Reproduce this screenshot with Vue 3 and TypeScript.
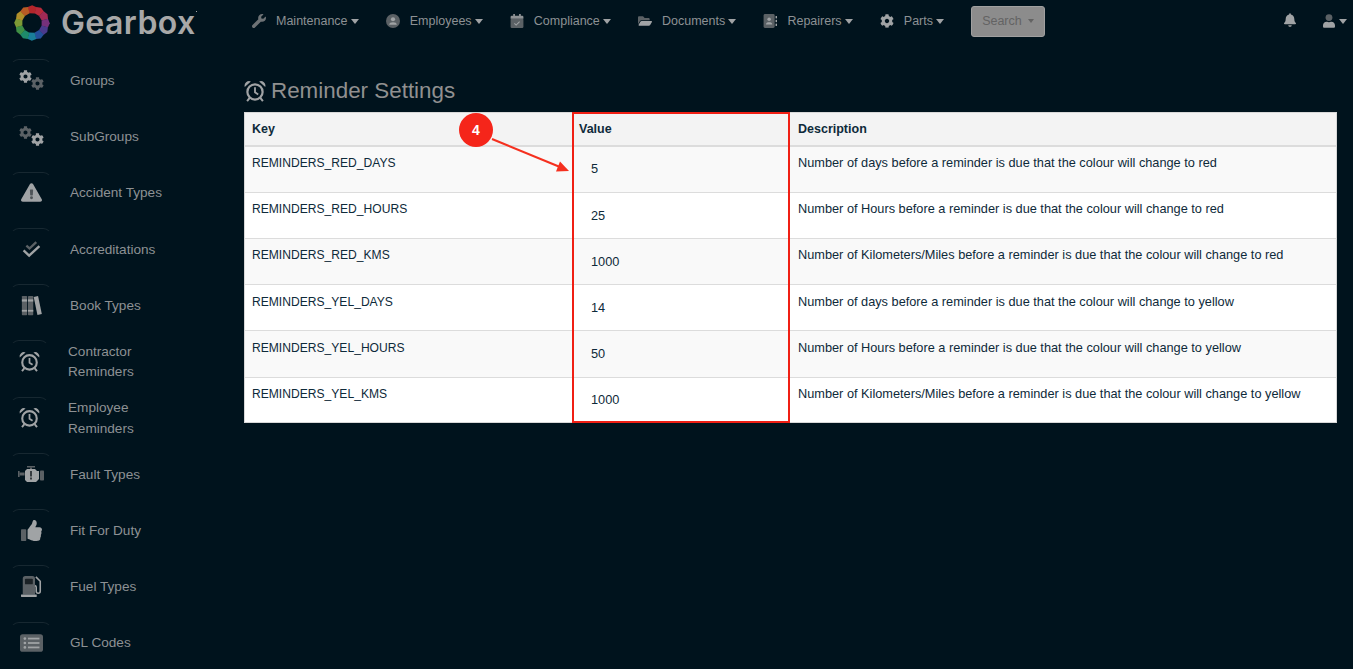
<template>
  <div class="page">
    <header class="topbar">
      <div class="brand">
        <svg class="logo" viewBox="0 0 36 36">
          <polygon v-for="seg in logoSegments" :key="seg.color" :points="seg.points" :fill="seg.color" />
        </svg>
        <span class="brand-name">Gearbox</span>
        <span class="brand-tm"></span>
      </div>

      <nav class="nav">
        <a v-for="item in navItems" :key="item.label" class="nav-item">
          <svg class="nav-icon" :viewBox="icons[item.icon].box">
            <g v-html="icons[item.icon].body"></g>
          </svg>
          <span>{{ item.label }}</span>
          <i class="caret"></i>
        </a>
        <button class="search-btn" type="button">Search <i class="caret small"></i></button>
      </nav>

      <div class="top-right">
        <svg class="bell" :viewBox="icons.bell.box"><g v-html="icons.bell.body"></g></svg>
        <svg class="user" :viewBox="icons.user.box"><g v-html="icons.user.body"></g></svg>
        <i class="caret"></i>
      </div>
    </header>

    <div class="body-wrap">
      <aside class="sidebar">
        <a v-for="item in sideItems" :key="item.label" class="side-item" :class="{ wrapped: item.wrapped }">
          <span class="side-box">
            <svg :width="icons[item.icon].w" :height="icons[item.icon].h" :viewBox="icons[item.icon].box">
              <g v-html="icons[item.icon].body"></g>
            </svg>
          </span>
          <span class="side-label">{{ item.label }}</span>
        </a>
      </aside>

      <main class="content">
        <h1 class="title">
          <svg class="title-icon" :viewBox="icons.alarm.box"><g v-html="icons.alarm.body"></g></svg>
          Reminder Settings
        </h1>

        <div class="table-wrap">
          <table class="settings">
            <colgroup>
              <col class="col-key" />
              <col class="col-value" />
              <col />
            </colgroup>
            <thead>
              <tr>
                <th>Key</th>
                <th>Value</th>
                <th>Description</th>
              </tr>
            </thead>
            <tbody>
              <tr v-for="row in rows" :key="row.key">
                <td class="key">{{ row.key }}</td>
                <td><span class="value">{{ row.value }}</span></td>
                <td>{{ row.description }}</td>
              </tr>
            </tbody>
          </table>

          <!-- annotation drawn on top of the table -->
          <div class="highlight"></div>
          <svg class="arrow" viewBox="0 0 120 70">
            <line x1="8" y1="12" x2="76" y2="40" stroke="#f5301f" stroke-width="2" />
            <polygon points="85,44 72,44.5 76,34.5" fill="#f5301f" />
          </svg>
          <div class="badge">4</div>
        </div>
      </main>
    </div>
  </div>
</template>

<script setup lang="ts">
interface IconDef {
  box: string
  body: string
  w?: number
  h?: number
}

const cog =
  'M487.4 315.7l-42.6-24.6c4.3-23.2 4.3-47 0-70.2l42.6-24.6c4.9-2.8 7.1-8.6 5.5-14-11.1-35.6-30-67.8-54.7-94.6-3.8-4.1-10-5.1-14.8-2.3L380.8 110c-17.9-15.4-38.5-27.3-60.8-35.1V25.8c0-5.6-3.9-10.5-9.4-11.7-36.7-8.2-74.3-7.8-109.2 0-5.5 1.2-9.4 6.1-9.4 11.7V75c-22.2 7.9-42.8 19.8-60.8 35.1L88.7 85.5c-4.9-2.8-11-1.9-14.8 2.3-24.7 26.7-43.6 58.9-54.7 94.6-1.7 5.4.6 11.2 5.5 14L67.3 221c-4.3 23.2-4.3 47 0 70.2l-42.6 24.6c-4.9 2.8-7.1 8.6-5.5 14 11.1 35.6 30 67.8 54.7 94.6 3.8 4.1 10 5.1 14.8 2.3l42.6-24.6c17.9 15.4 38.5 27.3 60.8 35.1v49.2c0 5.6 3.9 10.5 9.4 11.7 36.7 8.2 74.3 7.8 109.2 0 5.5-1.2 9.4-6.1 9.4-11.7v-49.2c22.2-7.9 42.8-19.8 60.8-35.1l42.6 24.6c4.9 2.8 11 1.9 14.8-2.3 24.7-26.7 43.6-58.9 54.7-94.6 1.5-5.5-.7-11.3-5.6-14.1zM256 336c-44.1 0-80-35.9-80-80s35.9-80 80-80 80 35.9 80 80-35.9 80-80 80z'

const LIGHT = '#a0a3a5'
const DIM = '#5b6165'

const gears = (first: string, second: string): string =>
  `<path transform="scale(.0254)" fill="${first}" d="${cog}"/>` +
  `<path transform="translate(12 7) scale(.0254)" fill="${second}" d="${cog}"/>`

const alarm = `
  <circle cx="12" cy="13" r="8.3" fill="none" stroke="${LIGHT}" stroke-width="2.4"/>
  <path d="M12 8V13.5L15.5 15.8" fill="none" stroke="${LIGHT}" stroke-width="2"/>
  <path d="M.8 7.5 A5 5 0 0 1 7.5 1.6 Z M23.2 7.5 A5 5 0 0 0 16.5 1.6 Z" fill="${LIGHT}"/>
  <path d="M6.2 19.5L3.4 23M17.8 19.5L20.6 23" stroke="${LIGHT}" stroke-width="2.2"/>`

const icons: Record<string, IconDef> = {
  wrench: {
    box: '0 0 512 512',
    body: `<path fill="#6d7275" d="M507.73 109.1c-2.24-9.03-13.54-12.09-20.12-5.51l-74.36 74.36-67.88-11.31-11.31-67.88 74.36-74.36c6.62-6.62 3.43-17.9-5.66-20.16-47.38-11.74-99.55.91-136.58 37.93-39.64 39.64-50.55 97.1-34.05 147.2L18.74 402.76c-24.99 24.99-24.99 65.51 0 90.5 24.99 24.99 65.51 24.99 90.5 0l213.21-213.21c50.12 16.71 107.47 5.68 147.37-34.22 37.07-37.07 49.7-89.32 37.91-136.73z"/>`
  },
  userCircle: {
    box: '0 0 24 24',
    body: `<circle cx="12" cy="12" r="12" fill="#5b6165"/><circle cx="12" cy="9" r="3.6" fill="#a0a3a5"/><path d="M5.5 18.5c0-3.2 2.6-4.5 6.5-4.5s6.5 1.3 6.5 4.5z" fill="#a0a3a5"/>`
  },
  calendar: {
    box: '0 0 24 24',
    body: `<rect x="1" y="8" width="22" height="16" rx="2" fill="#5b6165"/><path d="M3 3h18a2 2 0 0 1 2 2v3H1V5a2 2 0 0 1 2-2z" fill="#8f9295"/><rect x="5.5" y="0" width="3" height="5" fill="#8f9295"/><rect x="15.5" y="0" width="3" height="5" fill="#8f9295"/><path d="M7.5 16l3 3 6-6" fill="none" stroke="#a0a3a5" stroke-width="1.8"/>`
  },
  folder: {
    box: '0 0 576 512',
    body: `<path fill="#a0a3a5" d="M572.694 292.093L500.27 416.248A63.997 63.997 0 0 1 444.989 448H45.025c-18.523 0-30.064-20.093-20.731-36.093l72.424-124.155A64 64 0 0 1 152 256h399.964c18.523 0 30.064 20.093 20.73 36.093z"/><path fill="#5b6165" d="M152 224h328v-48c0-26.51-21.49-48-48-48H272l-64-64H48C21.49 64 0 85.49 0 112v278.046l69.077-118.418C86.214 242.25 117.989 224 152 224z"/>`
  },
  addressBook: {
    box: '0 0 24 24',
    body: `<rect x="1" y="0" width="19" height="24" rx="2.5" fill="#5b6165"/><circle cx="10.5" cy="9" r="3" fill="#a0a3a5"/><path d="M5 18c0-3 2.4-4 5.5-4s5.5 1 5.5 4z" fill="#a0a3a5"/><rect x="21.5" y="3.5" width="2.5" height="4" fill="#a0a3a5"/><rect x="21.5" y="10" width="2.5" height="4" fill="#a0a3a5"/><rect x="21.5" y="16.5" width="2.5" height="4" fill="#a0a3a5"/>`
  },
  cog: {
    box: '0 0 512 512',
    body: `<path fill="#a0a3a5" d="${cog}"/>`
  },
  bell: {
    box: '0 0 448 512',
    body: `<path fill="#a0a3a5" d="M224 512c35.32 0 63.97-28.65 63.97-64H160.03c0 35.35 28.65 64 63.97 64zm215.39-149.71c-19.32-20.76-55.47-51.99-55.47-154.29 0-77.7-54.48-139.9-127.94-155.16V32c0-17.67-14.32-32-31.98-32s-31.98 14.33-31.98 32v20.84C118.56 68.1 64.08 130.3 64.08 208c0 102.3-36.15 133.53-55.47 154.29-6 6.45-8.66 14.16-8.61 21.71.11 16.4 12.98 32 32.1 32h383.8c19.12 0 32-15.6 32.1-32 .05-7.55-2.61-15.27-8.61-21.71z"/>`
  },
  user: {
    box: '0 0 448 512',
    body: `<circle cx="224" cy="128" r="128" fill="#5b6165"/><path fill="#a0a3a5" d="M313.6 288h-16.7c-22.2 10.2-46.9 16-72.9 16s-50.6-5.8-72.9-16h-16.7C60.2 288 0 348.2 0 422.4V464c0 26.5 21.5 48 48 48h352c26.5 0 48-21.5 48-48v-41.6c0-74.2-60.2-134.4-134.4-134.4z"/>`
  },
  gearsA: { box: '0 0 25 20', w: 25, h: 20, body: gears(LIGHT, DIM) },
  gearsB: { box: '0 0 25 20', w: 25, h: 20, body: gears(DIM, LIGHT) },
  warning: {
    box: '0 0 576 512',
    w: 21,
    h: 19,
    body: `<path fill="#a0a3a5" d="M569.517 440.013C587.975 472.007 564.806 512 527.94 512H48.054c-36.937 0-59.999-40.055-41.577-71.987L246.423 23.985c18.467-32.009 64.72-31.951 83.154 0l239.94 416.028z"/><circle cx="288" cy="400" r="40" fill="#4e5458"/><path fill="#4e5458" d="M244.327 188.654l7.418 136c.347 6.364 5.609 11.346 11.982 11.346h48.546c6.373 0 11.635-4.982 11.982-11.346l7.418-136c.375-6.874-5.098-12.654-11.982-12.654h-63.383c-6.884 0-12.356 5.78-11.981 12.654z"/>`
  },
  checks: {
    box: '0 0 24 24',
    w: 19,
    h: 19,
    body: `<path d="M5.5 8.5l4 3.5L18 4" fill="none" stroke="#5b6165" stroke-width="3"/><path d="M2 14.5L9 21 22 9" fill="none" stroke="#a0a3a5" stroke-width="3"/>`
  },
  books: {
    box: '0 0 24 24',
    w: 21,
    h: 21,
    body: `<rect x="1" y="1" width="6" height="22" rx=".8" fill="#5b6165"/><rect x="8" y="1" width="6" height="22" rx=".8" fill="#5b6165"/><rect x="1" y="5" width="6" height="2.5" fill="#a0a3a5"/><rect x="8" y="5" width="6" height="2.5" fill="#a0a3a5"/><rect x="1" y="17" width="6" height="2" fill="#a0a3a5"/><rect x="8" y="17" width="6" height="2" fill="#a0a3a5"/><path d="M14.5 2.2L19.5 1l4.3 20.6-5 1.2z" fill="#a0a3a5"/>`
  },
  alarm: { box: '0 0 24 24', w: 21, h: 21, body: alarm },
  engine: {
    box: '0 0 26 16',
    w: 26,
    h: 16,
    body: `<rect x="9" y="0" width="8" height="1.5" fill="#5b6165"/><rect x="12" y="1.5" width="2" height="2" fill="#5b6165"/><rect x="0" y="5" width="1.6" height="6" fill="#5b6165"/><rect x="1.6" y="6.5" width="5" height="3" fill="#5b6165"/><path d="M7 5l2-2h8l2 2h2v8l-3 3H9l-2-2z" fill="#a0a3a5"/><rect x="22" y="4.5" width="4" height="10" rx=".8" fill="#5b6165"/><rect x="12" y="5" width="2" height="5.5" fill="#363c40"/><rect x="12" y="11.5" width="2" height="2" fill="#363c40"/>`
  },
  thumb: {
    box: '0 0 512 512',
    w: 21,
    h: 21,
    body: `<path fill="#5b6165" d="M104 224H24c-13.255 0-24 10.745-24 24v240c0 13.255 10.745 24 24 24h80c13.255 0 24-10.745 24-24V248c0-13.255-10.745-24-24-24z"/><path fill="#a0a3a5" d="M384 81.452c0 42.416-25.97 66.208-33.277 94.548h101.723c33.397 0 59.397 27.746 59.553 58.098.084 17.938-7.546 37.249-19.439 49.197l-.11.11c9.836 23.337 8.237 56.037-9.308 79.469 8.681 25.895-.069 57.704-16.382 74.757 4.298 17.598 2.244 32.575-6.148 44.632C440.202 511.587 389.616 512 346.839 512l-2.845-.001c-48.287-.017-87.806-17.598-119.56-31.725-15.957-7.099-36.821-15.887-52.651-16.178-6.54-.12-11.783-5.457-11.783-11.998v-213.77c0-3.2 1.282-6.271 3.558-8.521 39.614-39.144 56.648-80.587 89.117-113.111 14.804-14.832 20.188-37.236 25.393-58.902C282.515 39.293 291.817 0 312 0c24 0 72 8 72 81.452z"/>`
  },
  fuel: {
    box: '0 0 24 24',
    w: 21,
    h: 21,
    body: `<path d="M2 3a3 3 0 0 1 3-3h8a3 3 0 0 1 3 3v18H2z" fill="#5b6165"/><rect x="4.5" y="3" width="9" height="6.5" rx="1" fill="#1b2226"/><rect x="0" y="21" width="18" height="3" rx=".5" fill="#a0a3a5"/><path d="M17 1l5 5v11.5a2.3 2.3 0 0 1-4.6 0V13a2 2 0 0 0-1.4-2" fill="none" stroke="#a0a3a5" stroke-width="1.8"/>`
  },
  list: {
    box: '0 0 26 20',
    w: 23,
    h: 18,
    body: `<rect x="0" y="0" width="26" height="20" rx="3" fill="#5b6165"/><circle cx="5.5" cy="5" r="1.5" fill="#a0a3a5"/><circle cx="5.5" cy="10" r="1.5" fill="#a0a3a5"/><circle cx="5.5" cy="15" r="1.5" fill="#a0a3a5"/><rect x="9" y="4" width="13" height="2" fill="#a0a3a5"/><rect x="9" y="9" width="13" height="2" fill="#a0a3a5"/><rect x="9" y="14" width="13" height="2" fill="#a0a3a5"/>`
  }
}

const navItems = [
  { label: 'Maintenance', icon: 'wrench' },
  { label: 'Employees', icon: 'userCircle' },
  { label: 'Compliance', icon: 'calendar' },
  { label: 'Documents', icon: 'folder' },
  { label: 'Repairers', icon: 'addressBook' },
  { label: 'Parts', icon: 'cog' }
]

const sideItems = [
  { label: 'Groups', icon: 'gearsA' },
  { label: 'SubGroups', icon: 'gearsB' },
  { label: 'Accident Types', icon: 'warning' },
  { label: 'Accreditations', icon: 'checks' },
  { label: 'Book Types', icon: 'books' },
  { label: 'Contractor Reminders', icon: 'alarm', wrapped: true },
  { label: 'Employee Reminders', icon: 'alarm', wrapped: true },
  { label: 'Fault Types', icon: 'engine' },
  { label: 'Fit For Duty', icon: 'thumb' },
  { label: 'Fuel Types', icon: 'fuel' },
  { label: 'GL Codes', icon: 'list' }
]

const rows = [
  { key: 'REMINDERS_RED_DAYS', value: '5', description: 'Number of days before a reminder is due that the colour will change to red' },
  { key: 'REMINDERS_RED_HOURS', value: '25', description: 'Number of Hours before a reminder is due that the colour will change to red' },
  { key: 'REMINDERS_RED_KMS', value: '1000', description: 'Number of Kilometers/Miles before a reminder is due that the colour will change to red' },
  { key: 'REMINDERS_YEL_DAYS', value: '14', description: 'Number of days before a reminder is due that the colour will change to yellow' },
  { key: 'REMINDERS_YEL_HOURS', value: '50', description: 'Number of Hours before a reminder is due that the colour will change to yellow' },
  { key: 'REMINDERS_YEL_KMS', value: '1000', description: 'Number of Kilometers/Miles before a reminder is due that the colour will change to yellow' }
]

// logo ring, clockwise from the top
const ringColors = ['#b3262b', '#b82a3a', '#a02a55', '#75307a', '#4a3a8c', '#24509a', '#1a7f9a', '#1e8a6a', '#3f8f45', '#7d9a35', '#b08f2a', '#b85a25']
const logoSegments = ringColors.map((color, i) => {
  const step = (Math.PI * 2) / ringColors.length
  const a0 = i * step - Math.PI / 2 - step / 2
  const a1 = a0 + step + 0.02
  const pt = (r: number, a: number): string =>
    `${(18 + r * Math.cos(a)).toFixed(2)},${(18 + r * Math.sin(a)).toFixed(2)}`
  const am = (a0 + a1) / 2
  return { color, points: [pt(16.5, a0), pt(17.8, am), pt(16.5, a1), pt(10, a1), pt(10, a0)].join(' ') }
})
</script>

<style>
html,
body {
  background: #00131d;
}
</style>

<style scoped>
.page {
  height: 100vh;
  overflow: hidden;
  background: #00131d;
  font-family: 'Liberation Sans', Arial, sans-serif;
  color: #8d9194;
}

.topbar {
  height: 42px;
  display: flex;
  align-items: center;
}

.brand {
  width: 252px;
  flex-shrink: 0;
  display: flex;
  align-items: center;
  padding-left: 14px;
  box-sizing: border-box;
}
.logo {
  width: 36px;
  height: 36px;
  margin-top: 3px;
  flex-shrink: 0;
}
.brand-name {
  margin-left: 11px;
  font-family: 'Inter', 'Liberation Sans', sans-serif;
  font-weight: 600;
  font-size: 32px;
  letter-spacing: 0.4px;
  color: #a8a8a8;
  line-height: 36px;
  margin-top: 4px;
}
.brand-tm {
  width: 1px;
  height: 1px;
  background: #a8a8a8;
  margin-top: -20px;
}

.nav {
  display: flex;
  align-items: center;
  gap: 27.2px;
}
.nav-item {
  display: flex;
  align-items: center;
  font-size: 12.5px;
  white-space: nowrap;
}
.nav-icon {
  width: 14px;
  height: 14px;
  margin-right: 10px;
}
.caret {
  display: inline-block;
  width: 0;
  height: 0;
  margin-left: 3px;
  border-top: 5px solid #a0a3a5;
  border-left: 4px solid transparent;
  border-right: 4px solid transparent;
}
.caret.small {
  border-top-width: 4px;
  border-left-width: 3.5px;
  border-right-width: 3.5px;
  border-top-color: #636363;
  vertical-align: 2px;
}
.search-btn {
  width: 74px;
  height: 31px;
  padding: 0;
  background: #8c8c8c;
  border: 1px solid #a0a0a0;
  border-radius: 3px;
  color: #636363;
  font-family: inherit;
  font-size: 12.5px;
}

.top-right {
  margin-left: auto;
  display: flex;
  align-items: center;
  padding-right: 6px;
}
.bell {
  width: 12px;
  height: 14px;
  margin-right: 27px;
  margin-top: -3px;
}
.user {
  width: 12px;
  height: 14px;
  margin-right: 1px;
}

.body-wrap {
  display: flex;
}

.sidebar {
  width: 229px;
  flex-shrink: 0;
  padding: 11px 0 0 10px;
  box-sizing: border-box;
  display: flex;
  flex-direction: column;
}
.side-item {
  height: 56.25px;
  flex-shrink: 0;
  display: flex;
  align-items: center;
  font-size: 13.6px;
  line-height: 20.4px;
}
.side-box {
  width: 42px;
  height: 42px;
  margin-top: -2px;
  box-sizing: border-box;
  border: 1px solid transparent;
  border-top-color: rgba(255, 255, 255, 0.09);
  border-radius: 9px;
  display: flex;
  align-items: center;
  justify-content: center;
  flex-shrink: 0;
}
.side-label {
  margin-left: 18px;
  white-space: nowrap;
}
.wrapped .side-box {
  width: 39px;
}
.wrapped .side-label {
  margin-left: 19px;
  width: 90px;
  white-space: normal;
}

.content {
  flex: 1;
  min-width: 0;
  padding: 0 16px 0 15px;
}
.title {
  display: flex;
  align-items: center;
  gap: 5px;
  margin: 0;
  height: 70px;
  padding-top: 28px;
  box-sizing: border-box;
  font-size: 22.4px;
  font-weight: 400;
  color: #909090;
}
.title-icon {
  width: 22px;
  height: 22px;
}

.table-wrap {
  position: relative;
}
.settings {
  width: 100%;
  table-layout: fixed;
  border-collapse: collapse;
  background: #fff;
  color: #0e2a3a;
  font-size: 12.75px;
  outline: 1px solid #d8d8d8;
  outline-offset: -1px;
}
.col-key {
  width: 328px;
}
.col-value {
  width: 218px;
}
.settings th {
  height: 34px;
  padding: 0 8px;
  box-sizing: border-box;
  text-align: left;
  background: #f3f3f3;
  border-bottom: 2px solid #dcdcdc;
  font-size: 12.5px;
  font-weight: 700;
}
.settings th:nth-child(2) {
  padding-left: 7px;
}
.settings td {
  height: 46px;
  padding: 9px 8px 0;
  box-sizing: border-box;
  vertical-align: top;
  border-top: 1px solid #dcdcdc;
  line-height: 14px;
}
.settings td.key {
  font-size: 12.1px;
}
.settings tbody tr:nth-child(odd) td {
  background: #f9f9f9;
}
.settings tbody tr:nth-child(4) td,
.settings tbody tr:nth-child(5) td {
  padding-top: 10px;
}
.settings tbody tr:nth-child(5) td {
  height: 47px;
}
.settings .value {
  display: block;
  padding: 7px 0 0 11px;
}
.settings tbody tr:nth-child(1) .value,
.settings tbody tr:nth-child(4) .value,
.settings tbody tr:nth-child(5) .value,
.settings tbody tr:nth-child(6) .value {
  padding-top: 6px;
}

.highlight {
  position: absolute;
  left: 328px;
  top: 0;
  bottom: 0;
  width: 218px;
  box-sizing: border-box;
  border: 2px solid #f01f14;
}
.arrow {
  position: absolute;
  left: 240px;
  top: 15px;
  width: 120px;
  height: 70px;
}
.badge {
  position: absolute;
  left: 215px;
  top: 1px;
  width: 34px;
  height: 34px;
  border-radius: 50%;
  background: #f5251a;
  color: #fff;
  font-size: 14px;
  font-weight: 700;
  display: flex;
  align-items: center;
  justify-content: center;
}
</style>
